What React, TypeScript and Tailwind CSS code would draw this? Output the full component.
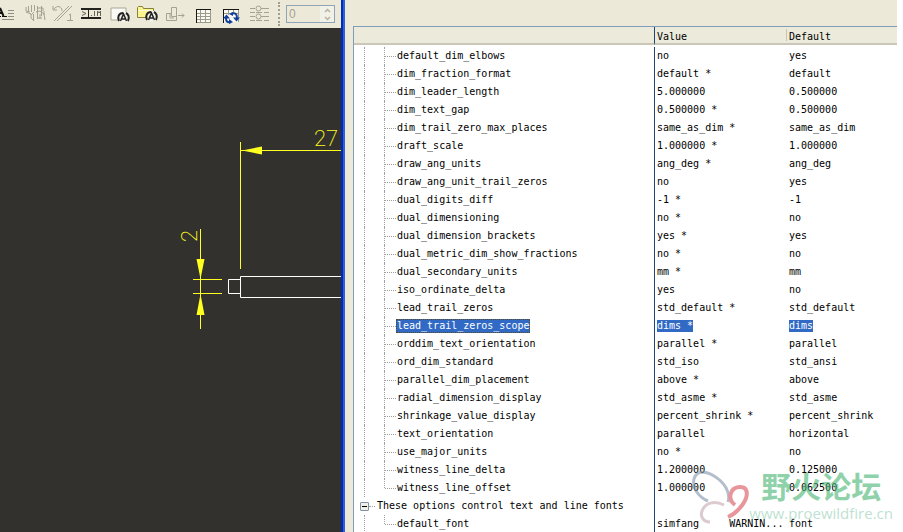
import type { ReactNode } from "react"

type Option = { name: string; value: string; fallback: string; group?: boolean; last?: boolean; selected?: boolean }

const options: Option[] = [
  { name: "default_dim_elbows", value: "no", fallback: "yes" },
  { name: "dim_fraction_format", value: "default *", fallback: "default" },
  { name: "dim_leader_length", value: "5.000000", fallback: "0.500000" },
  { name: "dim_text_gap", value: "0.500000 *", fallback: "0.500000" },
  { name: "dim_trail_zero_max_places", value: "same_as_dim *", fallback: "same_as_dim" },
  { name: "draft_scale", value: "1.000000 *", fallback: "1.000000" },
  { name: "draw_ang_units", value: "ang_deg *", fallback: "ang_deg" },
  { name: "draw_ang_unit_trail_zeros", value: "no", fallback: "yes" },
  { name: "dual_digits_diff", value: "-1 *", fallback: "-1" },
  { name: "dual_dimensioning", value: "no *", fallback: "no" },
  { name: "dual_dimension_brackets", value: "yes *", fallback: "yes" },
  { name: "dual_metric_dim_show_fractions", value: "no *", fallback: "no" },
  { name: "dual_secondary_units", value: "mm *", fallback: "mm" },
  { name: "iso_ordinate_delta", value: "yes", fallback: "no" },
  { name: "lead_trail_zeros", value: "std_default *", fallback: "std_default" },
  { name: "lead_trail_zeros_scope", value: "dims *", fallback: "dims", selected: true },
  { name: "orddim_text_orientation", value: "parallel *", fallback: "parallel" },
  { name: "ord_dim_standard", value: "std_iso", fallback: "std_ansi" },
  { name: "parallel_dim_placement", value: "above *", fallback: "above" },
  { name: "radial_dimension_display", value: "std_asme *", fallback: "std_asme" },
  { name: "shrinkage_value_display", value: "percent_shrink *", fallback: "percent_shrink" },
  { name: "text_orientation", value: "parallel", fallback: "horizontal" },
  { name: "use_major_units", value: "no *", fallback: "no" },
  { name: "witness_line_delta", value: "1.200000", fallback: "0.125000" },
  { name: "witness_line_offset", value: "1.000000", fallback: "0.062500", last: true },
  { name: "These options control text and line fonts", value: "", fallback: "", group: true },
  { name: "default_font", value: "simfang     WARNIN...", fallback: "font", last: true },
]

// Every icon is drawn in toolbar coordinates, x is where its button starts
const tools: { label: string; x: number; art: ReactNode }[] = [
  {
    label: "Hands",
    x: 21,
    art: (
      <g fill="none" stroke="#a5a294">
        <path d="M26 7v4l4 1M28.500 6v6M31.500 5v7M34.500 5v6M26 12l5 2v4l3 3M34 12l-3 3M33.500 14v6M37.500 6v13M37 8h6v3M41.500 6v10M36 12l4-1 4 3 1 6M37 18h5M44 11v4M40 14v5" />
      </g>
    ),
  },
  {
    label: "Angle",
    x: 49,
    art: (
      <g fill="none" stroke="#a5a294">
        <path d="M53 6v4h4M54 9c3-4 8-3 8 2M54 21l15-15M57 21l15-15M69 15l1.500-1v6M67 20.500h6" />
      </g>
    ),
  },
  {
    label: "Dimension",
    x: 77,
    art: (
      <g fill="none" stroke="#22221e">
        <path d="M81 9h20M81 18h20" strokeWidth="2" />
        <path d="M88.500 8v11" />
        <path d="M82 11.500l4 2-4 2M91 15.500h1M94.500 11v5M97.500 16v-5l1.500 2 1.500-2v5" stroke="#66645a" />
      </g>
    ),
  },
  {
    label: "New text style",
    x: 105,
    art: (
      <g>
        <path d="M111 8h15v12h-15z" fill="#fbfaf5" stroke="#aaa798" />
        <circle cx="123.500" cy="17" r="5.500" fill="#f4f2ea" />
        <path d="M119 21c-2-4 0-8 4-8M128 21c2-4 0-7-2-8" fill="none" stroke="#222" strokeWidth="2" />
        <path d="M120.500 21l3-7 3 7M122 19h3" fill="none" stroke="#222" strokeWidth="1.500" />
      </g>
    ),
  },
  {
    label: "Open text style",
    x: 133,
    art: (
      <g>
        <path d="M137.500 17.500v-10l1-1h4l1 2h10v9z" fill="#fbf48f" stroke="#85803a" />
        <path d="M138 10.500h15" stroke="#fffde0" />
        <circle cx="151.500" cy="16" r="5.500" fill="#f4f2ea" />
        <path d="M147 20c-2-4 0-8 4-8M156 20c2-4 0-7-2-8" fill="none" stroke="#222" strokeWidth="2" />
        <path d="M148.500 20l3-7 3 7M150 18h3" fill="none" stroke="#222" strokeWidth="1.500" />
      </g>
    ),
  },
  {
    label: "Move",
    x: 161,
    art: (
      <g fill="none" stroke="#a5a294">
        <path d="M166.500 20.500v-7h5v-6h5v13zM171.500 13.500v3h5M178 15.500h6M182 13.500l2 2-2 2M170 13v5h4" />
      </g>
    ),
  },
  {
    label: "Table",
    x: 189,
    art: (
      <g fill="none" stroke="#9b998a">
        <path d="M196 9h15v13h-15z" fill="#faf9f2" stroke="none" />
        <path d="M200.500 10v12M205.500 10v12M210.500 10v12M197 13.500h14M197 16.500h14M197 19.500h14M197 22.500h14" />
        <path d="M196 9.500h15M196.500 9v14" stroke="#171714" />
      </g>
    ),
  },
  {
    label: "Update table",
    x: 217,
    art: (
      <g fill="none" stroke="#9b998a">
        <path d="M223 9h16v13h-16z" fill="#faf9f2" stroke="none" />
        <path d="M228.500 10v5M233.500 10v4M238.500 10v12M224 13.500h14" />
        <path d="M223 9.500h16M223.500 9v14" stroke="#171714" />
        <path d="M231 14c4-2 6 0 6 4M231 22c-4 1-5-1-5-4" stroke="#123e9c" strokeWidth="2" />
        <path d="M233 17.500h7l-3.500 4zM223 18.500h7l-3.500-4zM229 19l4 3-4 2zM233 12v4l-4-2z" fill="#123e9c" stroke="none" />
      </g>
    ),
  },
  {
    label: "Line style",
    x: 245,
    art: (
      <g fill="none" stroke="#a5a294">
        <path d="M250 8.500h5M261 8.500h8M250 12.500h5M256 12.500h6M264 12.500h5M250 16.500h5M261 16.500h8M250 20.500h5M256 20.500h6M264 20.500h5" />
        <circle cx="258.500" cy="8.500" r="2.500" />
        <circle cx="258.500" cy="16.500" r="2.500" />
      </g>
    ),
  },
]

function Toolbar() {
  return (
    <div className="flex h-[28px] items-center overflow-hidden bg-[#ece9d8]">
      <button type="button" aria-label="Text style" className="h-[28px] w-[21px] shrink-0">
        <svg width="21" height="28" viewBox="0 0 21 28" fill="none">
          <path d="M0 8l3.500 8M0 13h3" stroke="#111" strokeWidth="2" />
          <path d="M0 16.500h1M2 16.500h5" stroke="#111" />
          <path d="M8 10.500h6M8 13.500h6M8 16.500h6M2 19.500h12" stroke="#8f8d80" />
        </svg>
      </button>
      {tools.map((tool) => (
        <button key={tool.label} type="button" aria-label={tool.label} className="h-[28px] w-[28px] shrink-0">
          <svg width="28" height="28" viewBox={`${tool.x} 0 28 28`}>
            {tool.art}
          </svg>
        </button>
      ))}
      <div className="ml-[5px] h-[24px] shrink-0 border-l-2 border-dotted border-[#a29f90]" />
      <div className="ml-[6px] flex h-[18px] w-[49px] shrink-0 border border-[#8fa5b5] bg-[#ece9d8]">
        <input
          aria-label="Sheet"
          defaultValue="0"
          className="w-[33px] min-w-0 pl-[2px] font-['Liberation_Sans'] text-[12px] leading-[16px] text-[#a5a294]"
        />
        <div className="flex flex-1 flex-col bg-[#f2f1e8]">
          <button type="button" aria-label="Up" className="flex h-[8px] items-center justify-center">
            <svg width="7" height="5" viewBox="0 0 7 5">
              <path d="M1 4l2.500-2.500L6 4" fill="none" stroke="#b5b2a3" strokeWidth="1.500" />
            </svg>
          </button>
          <button type="button" aria-label="Down" className="flex h-[8px] items-center justify-center">
            <svg width="7" height="5" viewBox="0 0 7 5">
              <path d="M1 1l2.500 2.500L6 1" fill="none" stroke="#b5b2a3" strokeWidth="1.500" />
            </svg>
          </button>
        </div>
      </div>
    </div>
  )
}

function Drawing() {
  return (
    <svg width="341" height="504" viewBox="0 28 341 504" className="block">
      <g stroke="#ffff20" fill="none">
        <path d="M240.500 142v127M241 150.500h100M200.500 229v100M193 279.500h29M193 293.500h29" />
      </g>
      <g fill="#ffff20">
        <path d="M242 150.500l20-4v8zM200.500 279l-4-20h8zM200.500 294l-4 21h8z" />
        <g fontFamily="Roboto, sans-serif" fontWeight="200" fontSize="22">
          <text x="314" y="146">
            27
          </text>
          <text transform="translate(197 242) rotate(-90)">2</text>
        </g>
      </g>
      <path d="M341 276.500H240.500v21H341M240.500 279.500h-12v14h12" fill="none" stroke="#fff" />
    </svg>
  )
}

function TreeCell({ option }: { option: Option }) {
  if (option.group) {
    return (
      <div className="flex h-[18px] items-center pl-[6px]">
        <button
          type="button"
          aria-label="Collapse"
          className="flex h-[9px] w-[9px] items-center justify-center rounded-[1px] border border-[#7b92a8] bg-[#f1efe6]"
        >
          <span className="h-px w-[5px] bg-black" />
        </button>
        <span className="mr-[2px] w-[6px] border-t border-dotted border-[#a0a0a0]" />
        <span>{option.name}</span>
      </div>
    )
  }
  return (
    <div className="flex h-[18px] items-center pl-[10px]">
      <span className="h-full w-[20px] border-l border-dotted border-[#a0a0a0]" />
      <span
        className={
          option.last
            ? "h-[9px] self-start border-l border-dotted border-[#a0a0a0]"
            : "h-full border-l border-dotted border-[#a0a0a0]"
        }
      />
      <span className="w-[11px] border-t border-dotted border-[#a0a0a0]" />
      <span
        className={
          option.selected
            ? "h-[14px] border border-dotted border-[#5a4a20] bg-[#316ac5] leading-[12px] text-white"
            : "pl-px"
        }
      >
        {option.name}
      </span>
    </div>
  )
}

function OptionsTable() {
  return (
    <table className="w-full table-fixed border-collapse text-left font-['DejaVu_Sans_Mono',monospace] text-[10px] leading-[18px] text-black">
      <colgroup>
        <col className="w-[300px]" />
        <col className="w-[132px]" />
        <col />
      </colgroup>
      <thead>
        <tr>
          <th className="p-0 pb-[2px] font-normal">
            <div className="h-[18px] border-b-2 border-[#cbc7b8] bg-[#ebeadb]">
              <span className="sr-only">Option</span>
            </div>
          </th>
          <th className="p-0 pb-[2px] font-normal">
            <div className="h-[18px] border-b-2 border-l border-b-[#cbc7b8] border-l-[#1d4676] bg-[#ebeadb] pl-[2px] leading-[20px]">
              Value
            </div>
          </th>
          <th className="p-0 pb-[2px] font-normal">
            <div className="flex h-[18px] items-start border-b-2 border-[#cbc7b8] bg-[#ebeadb] leading-[20px]">
              <span className="mt-[2px] mr-[2px] h-[12px] border-l border-[#c7c5b2]" />
              Default
            </div>
          </th>
        </tr>
      </thead>
      <tbody>
        {options.map((option) => (
          <tr key={option.name} className="h-[18px]">
            <td className="p-0">
              <TreeCell option={option} />
            </td>
            <td className="p-0">
              <div className="flex h-[18px] items-center border-l border-[#1d4676] pl-[2px] whitespace-pre">
                <span className={option.selected ? "bg-[#316ac5] leading-[12px] text-white" : ""}>{option.value}</span>
              </div>
            </td>
            <td className="p-0 pl-[3px]">
              <div className="flex h-[18px] items-center">
                <span className={option.selected ? "bg-[#316ac5] leading-[12px] text-white" : ""}>{option.fallback}</span>
              </div>
            </td>
          </tr>
        ))}
      </tbody>
    </table>
  )
}

function Watermark() {
  return (
    <div className="pointer-events-none absolute right-[10px] bottom-[8px] flex items-end opacity-60">
      <svg width="58" height="56" viewBox="693 468 58 56" fill="none" className="shrink-0">
        <path d="M710 501c-10-4-16-14-14-22 2-8 11-9 20-3 10 6 17 16 14 26" stroke="#8295ab" strokeWidth="3" />
        <path d="M737 505c-8-6-5-17 4-18 9-1 10 8 4 17-5 7-10 11-15 13" stroke="#d9525c" strokeWidth="4" />
        <path d="M712 522c-7 0-10-6-8-11 3-8 12-11 22-6" stroke="#c4a9b0" strokeWidth="3" />
      </svg>
      <div className="flex flex-col items-center">
        <span className="font-['Noto_Sans_CJK_SC',sans-serif] text-[30px] leading-[34px] font-bold text-[#45b573]">野火论坛</span>
        <span className="font-['Open_Sans',sans-serif] text-[15px] leading-[22px] text-[#93cfb4]">www.proewildfire.cn</span>
      </div>
    </div>
  )
}

export default function App() {
  return (
    <div className="flex h-screen overflow-hidden bg-white">
      <div className="w-[341px] shrink-0 bg-[#32312d]">
        <Toolbar />
        <Drawing />
      </div>
      <div className="w-[4px] shrink-0 border-r-2 border-r-[#2a60d8] bg-[#0428b8]" />
      <div className="relative mr-[6px] min-w-0 flex-1 overflow-hidden bg-[#ece9d8] pt-[26px] pl-[8px]">
        <div className="border-t border-l border-[#7f9db9] bg-white">
          <OptionsTable />
        </div>
      </div>
      <Watermark />
    </div>
  )
}
